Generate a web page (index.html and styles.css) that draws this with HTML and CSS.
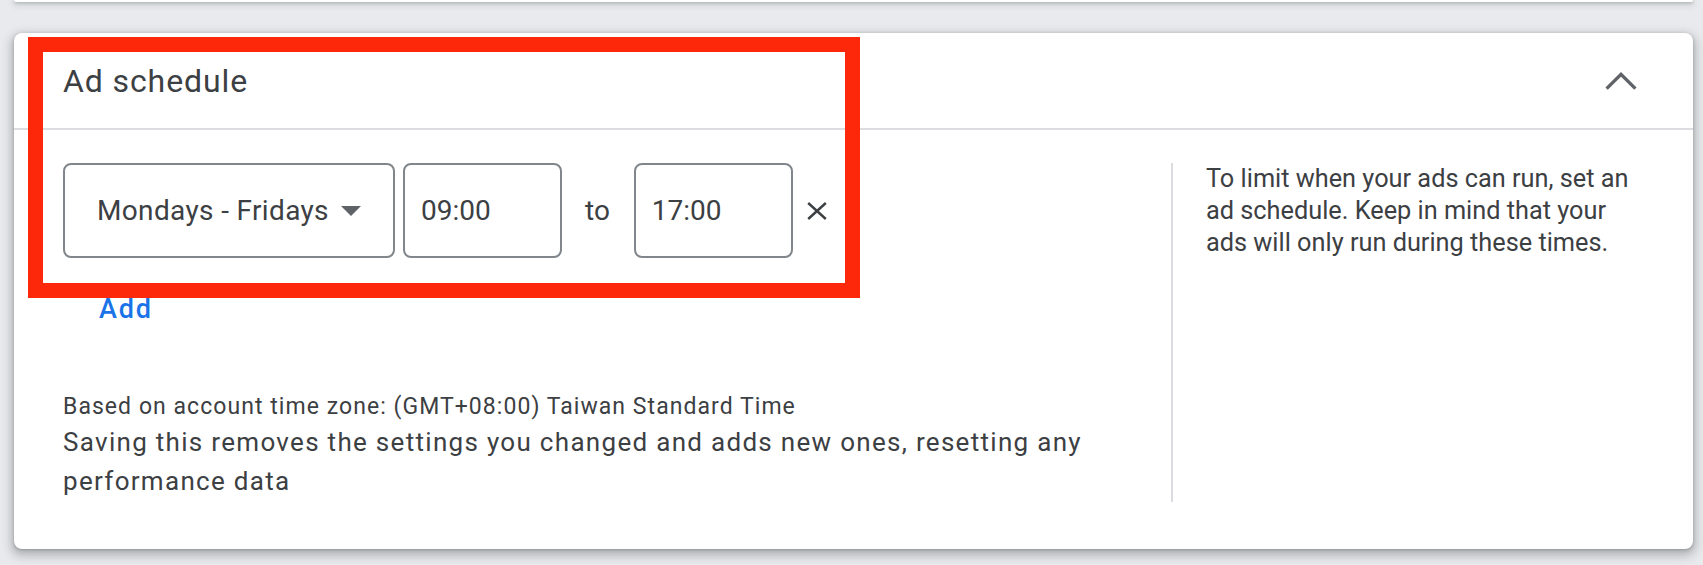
FILE: index.html
```html
<!DOCTYPE html>
<html lang="en">
<head>
<meta charset="utf-8">
<title>Ad schedule</title>
<link rel="stylesheet" href="styles.css">
</head>
<body>
<div class="page">
  <div class="prev-card"></div>
  <section class="card">
    <header class="card-header">
      <h2 class="card-title">Ad schedule</h2>
      <svg class="chevron" width="32" height="18" viewBox="0 0 32 18" aria-hidden="true">
        <polyline points="1.6,16.6 16,2.4 30.4,16.6" fill="none" stroke="#5f6368" stroke-width="3.4"/>
      </svg>
    </header>
    <div class="card-body">
      <div class="main">
        <div class="schedule-row">
          <div class="field select">
            <span>Mondays - Fridays</span>
            <svg class="dropdown" width="20" height="10" viewBox="0 0 20 10" aria-hidden="true">
              <polygon points="0,0 20,0 10,10" fill="#5f6368"/>
            </svg>
          </div>
          <div class="field time">09:00</div>
          <span class="to">to</span>
          <div class="field time">17:00</div>
          <svg class="remove" width="20" height="18" viewBox="0 0 20 18" aria-hidden="true">
            <line x1="1.2" y1="1" x2="18.8" y2="17" stroke="#3c4043" stroke-width="2.4"/>
            <line x1="18.8" y1="1" x2="1.2" y2="17" stroke="#3c4043" stroke-width="2.4"/>
          </svg>
        </div>
        <div class="add">Add</div>
        <p class="tz">Based on account time zone: (GMT+08:00) Taiwan Standard Time</p>
        <p class="note">Saving this removes the settings you changed and adds new ones, resetting any performance data</p>
      </div>
      <aside class="help">To limit when your ads can run, set an ad schedule. Keep in mind that your ads will only run during these times.</aside>
    </div>
    <div class="highlight"></div>
  </section>
</div>
</body>
</html>
```

FILE: styles.css
```css
* {
  box-sizing: border-box;
}

html, body {
  margin: 0;
  padding: 0;
}

body {
  background: #e8eaed;
  font-family: Roboto, "Liberation Sans", Arial, sans-serif;
  color: #3c4043;
  overflow: hidden;
  height: 565px;
}

.page {
  padding: 0 10px 0 14px;
}

.prev-card {
  height: 2px;
  background: #ffffff;
  border-radius: 0 0 8px 8px;
  box-shadow: 0 1px 3px rgba(60, 64, 67, 0.35), 0 2px 6px 1px rgba(60, 64, 67, 0.18);
}

.card {
  position: relative;
  margin-top: 31px;
  background: #ffffff;
  border-radius: 8px;
  box-shadow: 0 1px 3px rgba(60, 64, 67, 0.3), 0 4px 10px 3px rgba(60, 64, 67, 0.3);
}

.card-header {
  height: 97px;
  display: flex;
  align-items: center;
  padding: 0 56px 0 49px;
  border-bottom: 2px solid #dadce0;
}

.card-title {
  margin: 0;
  font-size: 32px;
  font-weight: 400;
  letter-spacing: 0.9px;
  line-height: 40px;
  color: #3c4043;
}

.chevron {
  margin-left: auto;
  display: block;
}

.card-body {
  display: flex;
  padding: 33px 49px 47px 49px;
}

.main {
  flex: 1;
  padding-right: 40px;
}

.schedule-row {
  display: flex;
  align-items: center;
  height: 95px;
}

.field {
  height: 95px;
  border: 2px solid #80868b;
  border-radius: 8px;
  display: flex;
  align-items: center;
  font-size: 28px;
  letter-spacing: 0.35px;
  color: #3c4043;
}

.select {
  width: 332px;
  padding: 0 32px 0 32px;
  justify-content: space-between;
}

.dropdown {
  display: block;
}

.time {
  width: 159px;
  padding: 0 16px;
  margin-left: 8px;
  letter-spacing: 0;
}

.to {
  font-size: 28px;
  margin: 0 24px 0 23px;
  color: #3c4043;
}

.time + .to + .time {
  margin-left: 0;
}

.remove {
  display: block;
  margin-left: 14px;
}

.add {
  margin-top: 33px;
  margin-left: 36px;
  height: 36px;
  line-height: 36px;
  font-size: 27px;
  font-weight: 500;
  letter-spacing: 1.8px;
  color: #1a73e8;
}

.tz {
  margin: 65px 0 0 0;
  font-size: 23px;
  line-height: 30px;
  letter-spacing: 1.05px;
  color: #3c4043;
}

.note {
  margin: 1px 0 0 0;
  font-size: 26px;
  line-height: 39.3px;
  letter-spacing: 1.3px;
  color: #3c4043;
}

.help {
  width: 473px;
  flex: none;
  border-left: 2px solid #dadce0;
  padding: 0 2px 0 33px;
  font-size: 25.3px;
  line-height: 32px;
  color: #3c4043;
}

.highlight {
  position: absolute;
  left: 14px;
  top: 4px;
  width: 832px;
  height: 261px;
  border: 15px solid #fd280a;
  pointer-events: none;
}
```
